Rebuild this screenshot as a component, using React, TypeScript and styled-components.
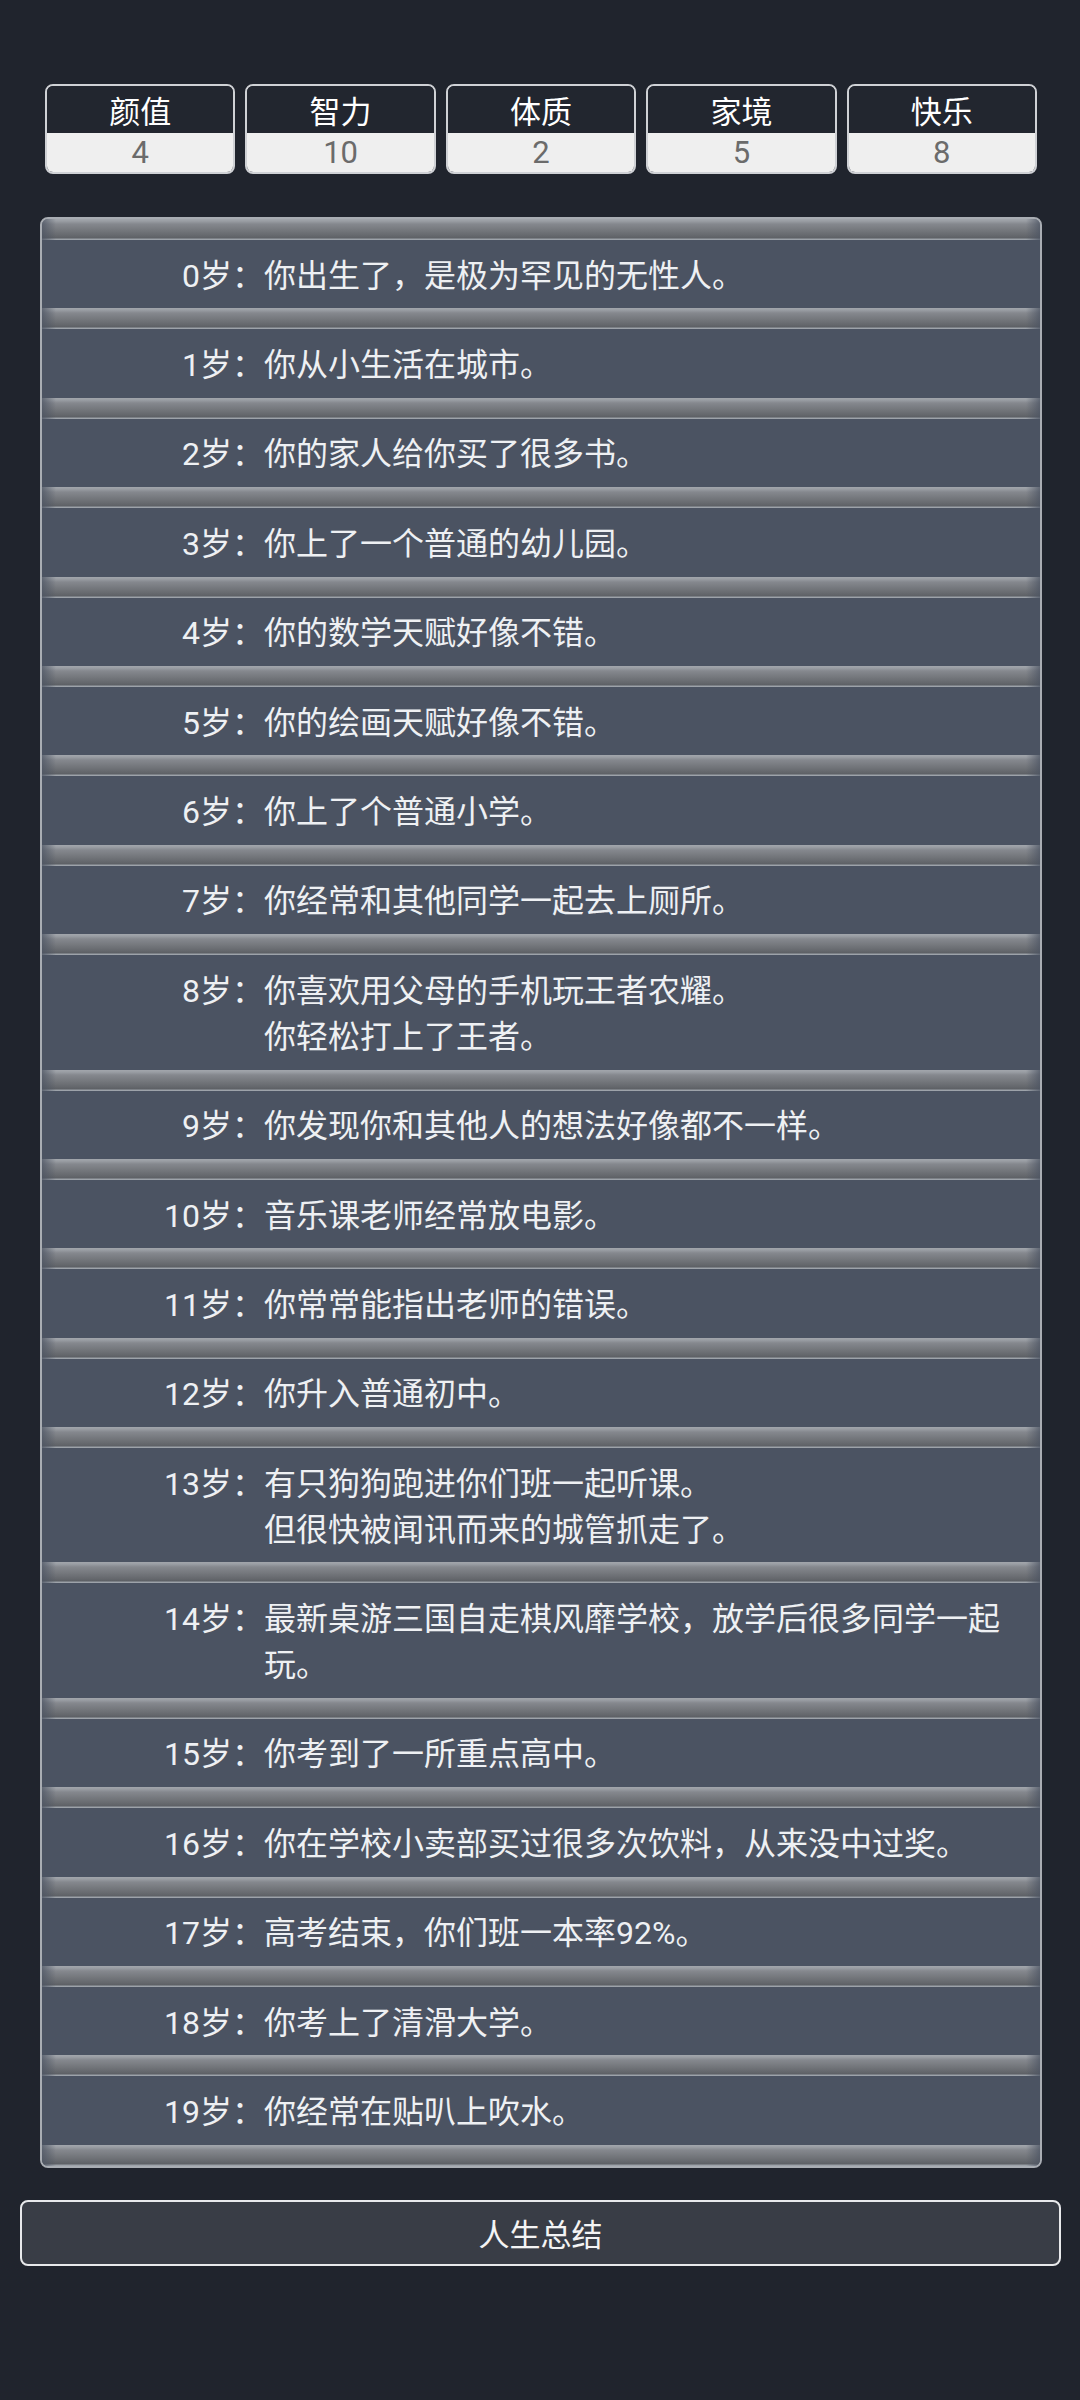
import React from "react";
import styled, { createGlobalStyle } from "styled-components";

const GlobalStyle = createGlobalStyle`
  html, body {
    margin: 0;
    padding: 0;
    background: #20242d;
  }
  body {
    min-height: 2400px;
    font-family: "Roboto", "Noto Sans CJK SC", sans-serif;
  }
`;

const Page = styled.div`
  display: flex;
  flex-direction: column;
  padding-top: 84px;
  padding-bottom: 40px;
`;

const StatsBar = styled.div`
  display: flex;
  gap: 10px;
  padding: 0 43px 0 45px;
`;

const StatCard = styled.div`
  flex: 1;
  display: flex;
  flex-direction: column;
  border: 2px solid #cfd1d5;
  border-radius: 8px;
  overflow: hidden;
`;

const StatLabel = styled.div`
  height: 47px;
  background: #22262f;
  color: #ffffff;
  font-family: "Noto Sans CJK SC", sans-serif;
  font-size: 31px;
  line-height: 47px;
  text-align: center;
`;

const StatValue = styled.div`
  height: 39px;
  background: #efefef;
  color: #6b6b6b;
  font-family: "Roboto", sans-serif;
  font-size: 31px;
  line-height: 39px;
  text-align: center;
`;

const Panel = styled.div`
  margin: 43px 38px 0 40px;
  border: 2px solid #a9adb3;
  border-radius: 8px;
  overflow: hidden;
  background: #4b5362;
  display: flex;
  flex-direction: column;
`;

const Band = styled.div`
  position: relative;
  height: 21px;
  background: linear-gradient(
    to bottom,
    #a2a6ac 0px,
    #9a9ea4 2px,
    #85888e 5px,
    #75787d 11px,
    #64676c 17px,
    #5d6065 19px,
    #9aa0a7 20px,
    #a0a5ac 21px
  );
  &::after {
    content: "";
    position: absolute;
    inset: 0;
    background: linear-gradient(
      to right,
      rgba(75, 83, 98, 0.75) 0,
      rgba(75, 83, 98, 0) 14px,
      rgba(75, 83, 98, 0) calc(100% - 14px),
      rgba(75, 83, 98, 0.75) 100%
    );
  }
`;

const Row = styled.div`
  display: grid;
  grid-template-columns: 222px 1fr;
  align-items: start;
  padding: 12.6px 24px 9.8px 0;
  color: #eef0f3;
  font-family: "Roboto", "Noto Sans CJK SC", sans-serif;
  font-size: 32px;
  line-height: 46px;
`;

const Age = styled.div`
  text-align: right;
  white-space: nowrap;
`;

const Text = styled.div`
  white-space: pre-line;
`;

const SummaryButton = styled.button`
  margin: 32px 19px 0 20px;
  height: 66px;
  background: #393d46;
  border: 2px solid #e8e9eb;
  border-radius: 8px;
  color: #f4f4f4;
  font-family: "Noto Sans CJK SC", sans-serif;
  font-size: 31px;
  line-height: 62px;
  padding: 0;
  text-align: center;
`;

const stats = [
  { label: "颜值", value: 4 },
  { label: "智力", value: 10 },
  { label: "体质", value: 2 },
  { label: "家境", value: 5 },
  { label: "快乐", value: 8 },
];

const events: string[] = [
  "你出生了，是极为罕见的无性人。",
  "你从小生活在城市。",
  "你的家人给你买了很多书。",
  "你上了一个普通的幼儿园。",
  "你的数学天赋好像不错。",
  "你的绘画天赋好像不错。",
  "你上了个普通小学。",
  "你经常和其他同学一起去上厕所。",
  "你喜欢用父母的手机玩王者农耀。\n你轻松打上了王者。",
  "你发现你和其他人的想法好像都不一样。",
  "音乐课老师经常放电影。",
  "你常常能指出老师的错误。",
  "你升入普通初中。",
  "有只狗狗跑进你们班一起听课。\n但很快被闻讯而来的城管抓走了。",
  "最新桌游三国自走棋风靡学校，放学后很多同学一起玩。",
  "你考到了一所重点高中。",
  "你在学校小卖部买过很多次饮料，从来没中过奖。",
  "高考结束，你们班一本率92%。",
  "你考上了清滑大学。",
  "你经常在贴叭上吹水。",
];

export default function App() {
  return (
    <>
      <GlobalStyle />
      <Page>
        <StatsBar>
          {stats.map((s) => (
            <StatCard key={s.label}>
              <StatLabel>{s.label}</StatLabel>
              <StatValue>{s.value}</StatValue>
            </StatCard>
          ))}
        </StatsBar>
        <Panel>
          <Band />
          {events.map((e, i) => (
            <React.Fragment key={i}>
              <Row>
                <Age>{i}岁：</Age>
                <Text>{e}</Text>
              </Row>
              <Band />
            </React.Fragment>
          ))}
        </Panel>
        <SummaryButton>人生总结</SummaryButton>
      </Page>
    </>
  );
}
